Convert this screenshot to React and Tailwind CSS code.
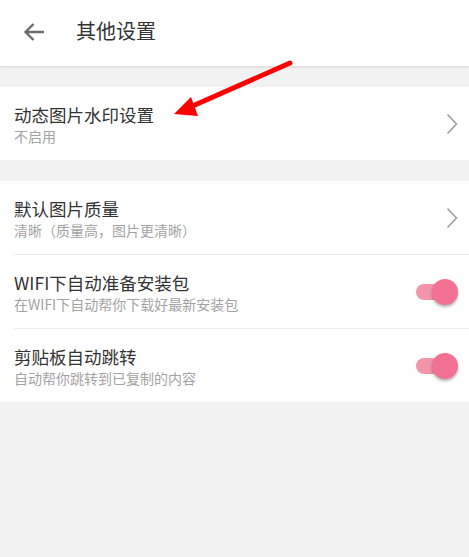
import React from 'react';

const font = { fontFamily: '"Noto Sans CJK SC", "Noto Sans", sans-serif' };

const Chevron = () => (
  <svg width="12" height="22" viewBox="0 0 12 22" className="shrink-0">
    <path d="M1.5 1.5 L10.5 11 L1.5 20.5" fill="none" stroke="#9e9e9e" strokeWidth="1.6" />
  </svg>
);

const Toggle = () => (
  <div className="relative w-[42px] h-[26px] shrink-0">
    <div className="absolute left-0 top-[5px] w-[36px] h-[16px] rounded-full bg-[#f394a9]" />
    <div className="absolute right-0 top-0 w-[26px] h-[26px] rounded-full bg-[#f27193] shadow-[0_2px_3px_rgba(0,0,0,0.3)]" />
  </div>
);

const Row = ({ title, sub, right, border }) => (
  <div className={`flex items-center justify-between pr-[11px] ${border ? 'h-[74px] border-t border-[#ececec]' : 'h-[73px]'}`}>
    <div className="flex flex-col">
      <span className="text-[17.5px] leading-[24px] text-[#333333]">{title}</span>
      <span className="text-[14px] leading-[18px] text-[#a3a3a3]">{sub}</span>
    </div>
    {right}
  </div>
);

export default function App() {
  return (
    <div className="relative w-[469px] h-[557px] bg-[#f2f2f2] overflow-hidden" style={font}>
      {/* header */}
      <div className="h-[66px] bg-white flex items-center shadow-[0_1px_3px_rgba(0,0,0,0.12)] relative z-10">
        <svg width="22" height="20" viewBox="0 0 22 20" className="ml-[23px] mb-[3px]">
          <path d="M21 10 H3 M10.5 2 L2.5 10 L10.5 18" fill="none" stroke="#6b6b6b" strokeWidth="2.4" />
        </svg>
        <span className="ml-[31px] mb-[4px] text-[20px] text-[#333333]">其他设置</span>
      </div>

      <div className="mt-[21px] bg-white pl-[14px]">
        <Row title="动态图片水印设置" sub="不启用" right={<Chevron />} />
      </div>

      <div className="mt-[21px] bg-white pl-[14px]">
        <Row title="默认图片质量" sub="清晰（质量高，图片更清晰）" right={<Chevron />} />
        <Row title="WIFI下自动准备安装包" sub="在WIFI下自动帮你下载好最新安装包" right={<Toggle />} border />
        <Row title="剪贴板自动跳转" sub="自动帮你跳转到已复制的内容" right={<Toggle />} border />
      </div>

      {/* annotation arrow */}
      <svg className="absolute left-0 top-0 z-20 pointer-events-none" width="469" height="557">
        <line x1="290" y1="63" x2="188" y2="108" stroke="#ff0000" strokeWidth="5" strokeLinecap="round" />
        <polygon points="174,114 191,97 198,116" fill="#ff0000" />
      </svg>
    </div>
  );
}
